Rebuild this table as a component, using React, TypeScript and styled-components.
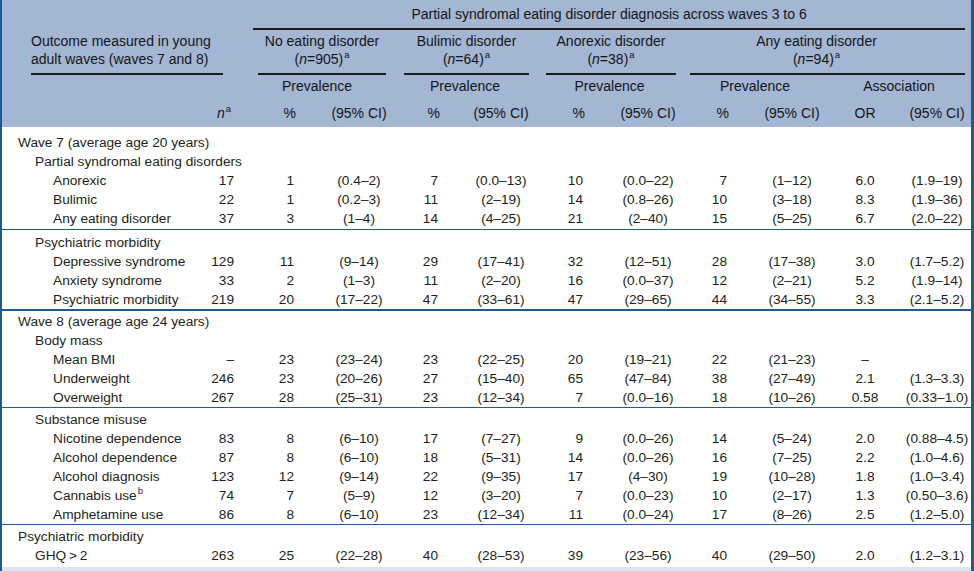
import styled, { createGlobalStyle } from 'styled-components';

type Align = 'left' | 'right' | 'center';

interface Col {
  w: number;
  align: Align;
  pad: number;
}

// column widths chosen so numbers line up with the printed table
const COLS: Col[] = [
  { w: 204, align: 'left', pad: 0 },
  { w: 34, align: 'right', pad: 6 },
  { w: 84, align: 'right', pad: 30 },
  { w: 70, align: 'center', pad: 0 },
  { w: 72, align: 'right', pad: 28 },
  { w: 70, align: 'center', pad: 0 },
  { w: 77, align: 'right', pad: 30 },
  { w: 70, align: 'center', pad: 0 },
  { w: 74, align: 'right', pad: 30 },
  { w: 70, align: 'center', pad: 0 },
  { w: 76, align: 'center', pad: 0 },
  { w: 68, align: 'center', pad: 0 },
];

interface Line {
  level: 0 | 1 | 2;
  label: string;
  sup?: string;
  v?: string[];
}

interface Group {
  top: number;
  bottom: number;
  rule: string;
  rows: Line[];
}

const GROUPS: Group[] = [
  {
    top: 6,
    bottom: 1,
    rule: '1px solid #245d92',
    rows: [
      { level: 0, label: 'Wave 7 (average age 20 years)' },
      { level: 1, label: 'Partial syndromal eating disorders' },
      { level: 2, label: 'Anorexic', v: ['17', '1', '(0.4–2)', '7', '(0.0–13)', '10', '(0.0–22)', '7', '(1–12)', '6.0', '(1.9–19)'] },
      { level: 2, label: 'Bulimic', v: ['22', '1', '(0.2–3)', '11', '(2–19)', '14', '(0.8–26)', '10', '(3–18)', '8.3', '(1.9–36)'] },
      { level: 2, label: 'Any eating disorder', v: ['37', '3', '(1–4)', '14', '(4–25)', '21', '(2–40)', '15', '(5–25)', '6.7', '(2.0–22)'] },
    ],
  },
  {
    top: 3,
    bottom: 0,
    rule: '2px solid #1f5a90',
    rows: [
      { level: 1, label: 'Psychiatric morbidity' },
      { level: 2, label: 'Depressive syndrome', v: ['129', '11', '(9–14)', '29', '(17–41)', '32', '(12–51)', '28', '(17–38)', '3.0', '(1.7–5.2)'] },
      { level: 2, label: 'Anxiety syndrome', v: ['33', '2', '(1–3)', '11', '(2–20)', '16', '(0.0–37)', '12', '(2–21)', '5.2', '(1.9–14)'] },
      { level: 2, label: 'Psychiatric morbidity', v: ['219', '20', '(17–22)', '47', '(33–61)', '47', '(29–65)', '44', '(34–55)', '3.3', '(2.1–5.2)'] },
    ],
  },
  {
    top: 1,
    bottom: 0,
    rule: '1px solid #245d92',
    rows: [
      { level: 0, label: 'Wave 8 (average age 24 years)' },
      { level: 1, label: 'Body mass' },
      { level: 2, label: 'Mean BMI', v: ['–', '23', '(23–24)', '23', '(22–25)', '20', '(19–21)', '22', '(21–23)', '–', ''] },
      { level: 2, label: 'Underweight', v: ['246', '23', '(20–26)', '27', '(15–40)', '65', '(47–84)', '38', '(27–49)', '2.1', '(1.3–3.3)'] },
      { level: 2, label: 'Overweight', v: ['267', '28', '(25–31)', '23', '(12–34)', '7', '(0.0–16)', '18', '(10–26)', '0.58', '(0.33–1.0)'] },
    ],
  },
  {
    top: 2,
    bottom: 0,
    rule: '1px solid #245d92',
    rows: [
      { level: 1, label: 'Substance misuse' },
      { level: 2, label: 'Nicotine dependence', v: ['83', '8', '(6–10)', '17', '(7–27)', '9', '(0.0–26)', '14', '(5–24)', '2.0', '(0.88–4.5)'] },
      { level: 2, label: 'Alcohol dependence', v: ['87', '8', '(6–10)', '18', '(5–31)', '14', '(0.0–26)', '16', '(7–25)', '2.2', '(1.0–4.6)'] },
      { level: 2, label: 'Alcohol diagnosis', v: ['123', '12', '(9–14)', '22', '(9–35)', '17', '(4–30)', '19', '(10–28)', '1.8', '(1.0–3.4)'] },
      { level: 2, label: 'Cannabis use', sup: 'b', v: ['74', '7', '(5–9)', '12', '(3–20)', '7', '(0.0–23)', '10', '(2–17)', '1.3', '(0.50–3.6)'] },
      { level: 2, label: 'Amphetamine use', v: ['86', '8', '(6–10)', '23', '(12–34)', '11', '(0.0–24)', '17', '(8–26)', '2.5', '(1.2–5.0)'] },
    ],
  },
  {
    top: 2,
    bottom: 2,
    rule: '4px solid #dde4ef',
    rows: [
      { level: 0, label: 'Psychiatric morbidity' },
      { level: 1, label: 'GHQ\u2009>\u20092', v: ['263', '25', '(22–28)', '40', '(28–53)', '39', '(23–56)', '40', '(29–50)', '2.0', '(1.2–3.1)'] },
    ],
  },
];

const INDENT = [16, 33, 51];

const DISORDERS = [
  { name: 'No eating disorder', n: '905', l: 18, r: 8, span: 2, shift: 0 },
  { name: 'Bulimic disorder', n: '64', l: 10, r: 7, span: 2, shift: 0 },
  { name: 'Anorexic disorder', n: '38', l: 10, r: 7, span: 2, shift: 0 },
  { name: 'Any eating disorder', n: '94', l: 7, r: 6, span: 4, shift: 22 },
];

export default function App() {
  return (
    <>
      <GlobalStyle />
      <Frame>
        <Table>
          <colgroup>
            {COLS.map((c, i) => (
              <col key={i} style={{ width: c.w }} />
            ))}
          </colgroup>
          <Head>
            <tr>
              <HeadCell colSpan={2} />
              <HeadCell colSpan={10}>
                <Ruled $l={13} $r={6} $pt={5}>
                  Partial syndromal eating disorder diagnosis across waves 3 to 6
                </Ruled>
              </HeadCell>
            </tr>
            <tr>
              <HeadCell colSpan={2} $align="left" $pt={2}>
                <Ruled $l={29} $r={17}>
                  Outcome measured in young
                  <br />
                  adult waves (waves 7 and 8)
                </Ruled>
              </HeadCell>
              {DISORDERS.map(d => (
                <HeadCell key={d.name} colSpan={d.span} $pt={2}>
                  <Ruled $l={d.l} $r={d.r} $shift={d.shift}>
                    {d.name}
                    <br />(<Ital>n</Ital>={d.n})<Sup>a</Sup>
                  </Ruled>
                </HeadCell>
              ))}
            </tr>
            <tr>
              <HeadCell colSpan={2} $pt={2} $pb={4} />
              <HeadCell colSpan={2} $pt={2} $pb={4}>Prevalence</HeadCell>
              <HeadCell colSpan={2} $pt={2} $pb={4}>Prevalence</HeadCell>
              <HeadCell colSpan={2} $pt={2} $pb={4}>Prevalence</HeadCell>
              <HeadCell colSpan={2} $pt={2} $pb={4}>Prevalence</HeadCell>
              <HeadCell colSpan={2} $pt={2} $pb={4}>Association</HeadCell>
            </tr>
            <tr>
              <HeadCell $pt={5} $pb={5} />
              <HeadCell $pt={5} $pb={5} $align="right" $pad={9}>
                <Ital>n</Ital>
                <Sup>a</Sup>
              </HeadCell>
              {['%', '(95% CI)', '%', '(95% CI)', '%', '(95% CI)', '%', '(95% CI)', 'OR', '(95% CI)'].map((t, i) => {
                const c = COLS[i + 2];
                return (
                  <HeadCell key={i} $pt={5} $pb={5} $align={c.align} $pad={c.align === 'right' ? c.pad - 2 : 0}>
                    {t}
                  </HeadCell>
                );
              })}
            </tr>
          </Head>
          {GROUPS.map((g, gi) => (
            <Group key={gi} $rule={g.rule}>
              {g.rows.map((r, ri) => {
                const pt = ri === 0 ? g.top : 0;
                const pb = ri === g.rows.length - 1 ? g.bottom : 0;
                return (
                  <tr key={ri}>
                    <Cell $align="left" $pad={0} $indent={INDENT[r.level]} $pt={pt} $pb={pb}>
                      {r.label}
                      {r.sup && <Sup>{r.sup}</Sup>}
                    </Cell>
                    {COLS.slice(1).map((c, ci) => (
                      <Cell key={ci} $align={c.align} $pad={c.pad} $pt={pt} $pb={pb}>
                        {r.v ? r.v[ci] : ''}
                      </Cell>
                    ))}
                  </tr>
                );
              })}
            </Group>
          ))}
        </Table>
      </Frame>
    </>
  );
}

const GlobalStyle = createGlobalStyle`
  html, body {
    margin: 0;
    padding: 0;
    background: #ffffff;
  }
  body {
    font-family: "Liberation Sans", Arial, sans-serif;
  }
`;

const Frame = styled.div`
  width: 974px;
  height: 571px;
  box-sizing: border-box;
  border-left: 2px solid #1b5a94;
  border-right: 3px solid #1b5a94;
  overflow: hidden;
`;

const Table = styled.table`
  width: 969px;
  border-collapse: collapse;
  table-layout: fixed;
  font-family: "Liberation Sans", Arial, sans-serif;
`;

const Head = styled.thead`
  background: #a3b6d4;
  color: #151515;
`;

const HeadCell = styled.th<{ $align?: Align; $pad?: number; $pt?: number; $pb?: number }>`
  padding: ${p => p.$pt ?? 0}px ${p => p.$pad ?? 0}px ${p => p.$pb ?? 0}px 0;
  text-align: ${p => p.$align ?? 'center'};
  font-weight: normal;
  font-size: 14px;
  line-height: 18px;
  vertical-align: top;
  white-space: nowrap;
`;

const Ruled = styled.div<{ $l: number; $r: number; $pt?: number; $shift?: number }>`
  margin: 0 ${p => p.$r}px 0 ${p => p.$l}px;
  padding: ${p => p.$pt ?? 0}px ${p => p.$shift ?? 0}px 5px 0;
  border-bottom: 2px solid #1c1c1c;
`;

const Ital = styled.i`
  font-style: italic;
`;

const Sup = styled.sup`
  font-size: 9.5px;
  line-height: 0;
  vertical-align: 6px;
  margin-left: 1px;
`;

const Group = styled.tbody<{ $rule: string }>`
  border-bottom: ${p => p.$rule};
`;

const Cell = styled.td<{ $align: Align; $pad: number; $indent?: number; $pt: number; $pb: number }>`
  padding: ${p => p.$pt}px ${p => (p.$align === 'right' ? p.$pad : 0)}px ${p => p.$pb}px
    ${p => p.$indent ?? 0}px;
  text-align: ${p => p.$align};
  font-size: 13.7px;
  line-height: 19px;
  height: 19px;
  color: #231f20;
  white-space: nowrap;
  vertical-align: top;
`;
